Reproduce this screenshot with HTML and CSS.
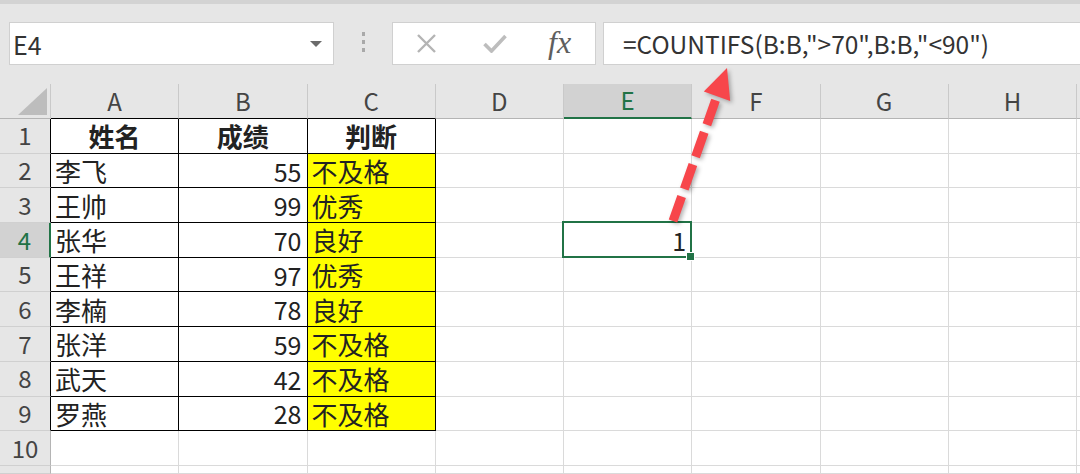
FILE: index.html
```html
<!DOCTYPE html>
<html>
<head>
    <meta charset="UTF-8" />
    <title>COUNTIFS</title>
    <link rel="stylesheet" href="styles.css">
</head>
<body>

<header class="toolbar">
  <div class="namebox">
    <span>E4</span>
    <svg width="12" height="6" viewBox="0 0 12 6"><path d="M0 0H12L6 6Z" fill="#6b6b6b"/></svg>
  </div>
  <div class="grip"><i></i><i></i><i></i></div>
  <div class="fxbox">
    <svg class="ico-x" width="21" height="19" viewBox="0 0 21 19"><path d="M2 1L19 18M19 1L2 18" stroke="#b4b4b4" stroke-width="2.4" fill="none"/></svg>
    <svg class="ico-ok" width="24" height="19" viewBox="0 0 24 19"><path d="M1.5 10L8.5 17L22.5 2" stroke="#bdbdbd" stroke-width="3.6" fill="none"/></svg>
    <span class="fx">fx</span>
  </div>
  <div class="formula">=COUNTIFS(B:B,"&gt;70",B:B,"&lt;90")</div>
</header>

<section class="sheet">
  <div class="hd corner"><span class="tri"></span></div>
  <div class="hd top-b">A</div>
  <div class="hd top-b">B</div>
  <div class="hd top-b">C</div>
  <div class="hd">D</div>
  <div class="hd sel">E</div>
  <div class="hd">F</div>
  <div class="hd">G</div>
  <div class="hd">H</div>
  <div class="hd"></div>

  <div class="rh left-b">1</div>
  <div class="c b bold">姓名</div><div class="c b bold">成绩</div><div class="c b bold">判断</div>
  <div class="c"></div><div class="c"></div><div class="c"></div><div class="c"></div><div class="c"></div><div class="c"></div>

  <div class="rh left-b">2</div>
  <div class="c b">李飞</div><div class="c b num">55</div><div class="c b y">不及格</div>
  <div class="c"></div><div class="c"></div><div class="c"></div><div class="c"></div><div class="c"></div><div class="c"></div>

  <div class="rh left-b">3</div>
  <div class="c b">王帅</div><div class="c b num">99</div><div class="c b y">优秀</div>
  <div class="c"></div><div class="c"></div><div class="c"></div><div class="c"></div><div class="c"></div><div class="c"></div>

  <div class="rh left-b sel">4</div>
  <div class="c b">张华</div><div class="c b num">70</div><div class="c b y">良好</div>
  <div class="c"></div><div class="c num act">1</div><div class="c"></div><div class="c"></div><div class="c"></div><div class="c"></div>

  <div class="rh left-b">5</div>
  <div class="c b">王祥</div><div class="c b num">97</div><div class="c b y">优秀</div>
  <div class="c"></div><div class="c"></div><div class="c"></div><div class="c"></div><div class="c"></div><div class="c"></div>

  <div class="rh left-b">6</div>
  <div class="c b">李楠</div><div class="c b num">78</div><div class="c b y">良好</div>
  <div class="c"></div><div class="c"></div><div class="c"></div><div class="c"></div><div class="c"></div><div class="c"></div>

  <div class="rh left-b">7</div>
  <div class="c b">张洋</div><div class="c b num">59</div><div class="c b y">不及格</div>
  <div class="c"></div><div class="c"></div><div class="c"></div><div class="c"></div><div class="c"></div><div class="c"></div>

  <div class="rh left-b">8</div>
  <div class="c b">武天</div><div class="c b num">42</div><div class="c b y">不及格</div>
  <div class="c"></div><div class="c"></div><div class="c"></div><div class="c"></div><div class="c"></div><div class="c"></div>

  <div class="rh left-b">9</div>
  <div class="c b">罗燕</div><div class="c b num">28</div><div class="c b y">不及格</div>
  <div class="c"></div><div class="c"></div><div class="c"></div><div class="c"></div><div class="c"></div><div class="c"></div>

  <div class="rh">10</div>
  <div class="c"></div><div class="c"></div><div class="c"></div>
  <div class="c"></div><div class="c"></div><div class="c"></div><div class="c"></div><div class="c"></div><div class="c"></div>

  <div class="rh"></div>
  <div class="c"></div><div class="c"></div><div class="c"></div>
  <div class="c"></div><div class="c"></div><div class="c"></div><div class="c"></div><div class="c"></div><div class="c"></div>
</section>

<!-- callout arrow pointing at the formula bar -->
<svg class="arrow" width="1080" height="474" viewBox="0 0 1080 474">
  <path d="M673 221L717 96" stroke="#f7464b" stroke-width="9" stroke-dasharray="26 8" fill="none"/>
  <path d="M727 68L703.8 91.6L730.2 101Z" fill="#f7464b"/>
</svg>

</body>
</html>
```

FILE: styles.css
```css
* {
  box-sizing: border-box;
}

body {
  margin: 0;
  width: 1080px;
  height: 474px;
  overflow: hidden;
  position: relative;
  background: #fff;
  font-family: "Noto Sans CJK SC", "Liberation Sans", sans-serif;
  color: #222;
}

/* formula bar */
.toolbar {
  display: flex;
  align-items: flex-start;
  height: 84px;
  padding: 18px 0 0 9px;
  background: #e6e6e6;
  border-top: 4px solid #d3d3d3;
}

.namebox,
.fxbox,
.formula {
  height: 43px;
  background: #fff;
  border: 1px solid #d0d0d0;
}

.namebox {
  width: 325px;
  display: flex;
  align-items: center;
  justify-content: space-between;
  padding: 0 11px 0 3px;
  font-size: 25px;
  color: #333;
}

.grip {
  width: 58px;
  height: 43px;
  display: flex;
  flex-direction: column;
  align-items: center;
  justify-content: center;
  gap: 4px;
  padding-bottom: 3px;
}
.grip i {
  width: 3px;
  height: 4px;
  background: #a9a9a9;
}

.fxbox {
  width: 204px;
  display: flex;
  align-items: center;
}
.ico-x {
  margin-left: 23px;
}
.ico-ok {
  margin-left: 46px;
}
.fx {
  margin-left: 41px;
  font-family: "Liberation Serif", serif;
  font-style: italic;
  font-size: 32px;
  line-height: 1;
  color: #5e5e5e;
  margin-top: -3px;
}

.formula {
  flex: 1;
  margin-left: 7px;
  margin-right: -2px;
  padding-left: 19px;
  font-size: 24.5px;
  line-height: 41px;
  color: #333;
}

/* sheet grid */
.sheet {
  display: grid;
  grid-template-columns: 51px repeat(8, 128.25px) 1fr;
  grid-template-rows: 35px repeat(10, 34.7px) 1fr;
  height: 390px;
}

.sheet > div {
  border-right: 1px solid #dadada;
  border-bottom: 1px solid #dadada;
  display: flex;
  align-items: center;
  white-space: nowrap;
  line-height: 1.2;
}

.hd {
  background: #e6e6e6;
  justify-content: center;
  font-size: 24px;
  color: #444;
  border-right-color: #c9c9c9 !important;
  border-bottom-color: #b4b4b4 !important;
}

.corner {
  position: relative;
}
.tri {
  position: absolute;
  right: 3px;
  bottom: 3px;
  width: 0;
  height: 0;
  border-left: 29px solid transparent;
  border-bottom: 27px solid #bdbdbd;
}

.rh {
  background: #e6e6e6;
  justify-content: center;
  font-size: 24px;
  color: #444;
  border-right-color: #b4b4b4 !important;
  border-bottom-color: #d0d0d0 !important;
}

.hd.top-b {
  border-bottom-color: #000 !important;
}
.rh.left-b {
  border-right-color: #000 !important;
}

.hd.sel {
  background: #d2d2d2;
  color: #217346;
  border-bottom: 2px solid #217346 !important;
}
.rh.sel {
  background: #d2d2d2;
  color: #217346;
  border-right: 2px solid #217346 !important;
}

.c {
  font-size: 26px;
  padding: 0 4px;
}
.c.b {
  border-right-color: #000;
  border-bottom-color: #000;
}
.c.bold {
  justify-content: center;
  font-weight: bold;
}
.c.num {
  justify-content: flex-end;
  padding-right: 5px;
  font-size: 25px;
}
.c.y {
  background: #ffff00;
}

.c.act {
  position: relative;
}
.c.act::after {
  content: "";
  position: absolute;
  top: -2px;
  left: -2px;
  right: -1px;
  bottom: -1px;
  border: 2px solid #217346;
}
.c.act::before {
  content: "";
  position: absolute;
  right: -4px;
  bottom: -4px;
  width: 7px;
  height: 7px;
  background: #217346;
  border: 1px solid #fff;
  z-index: 1;
}

.arrow {
  position: absolute;
  left: 0;
  top: 0;
  pointer-events: none;
  filter: drop-shadow(2px 2px 2px rgba(0, 0, 0, 0.3));
}
```
